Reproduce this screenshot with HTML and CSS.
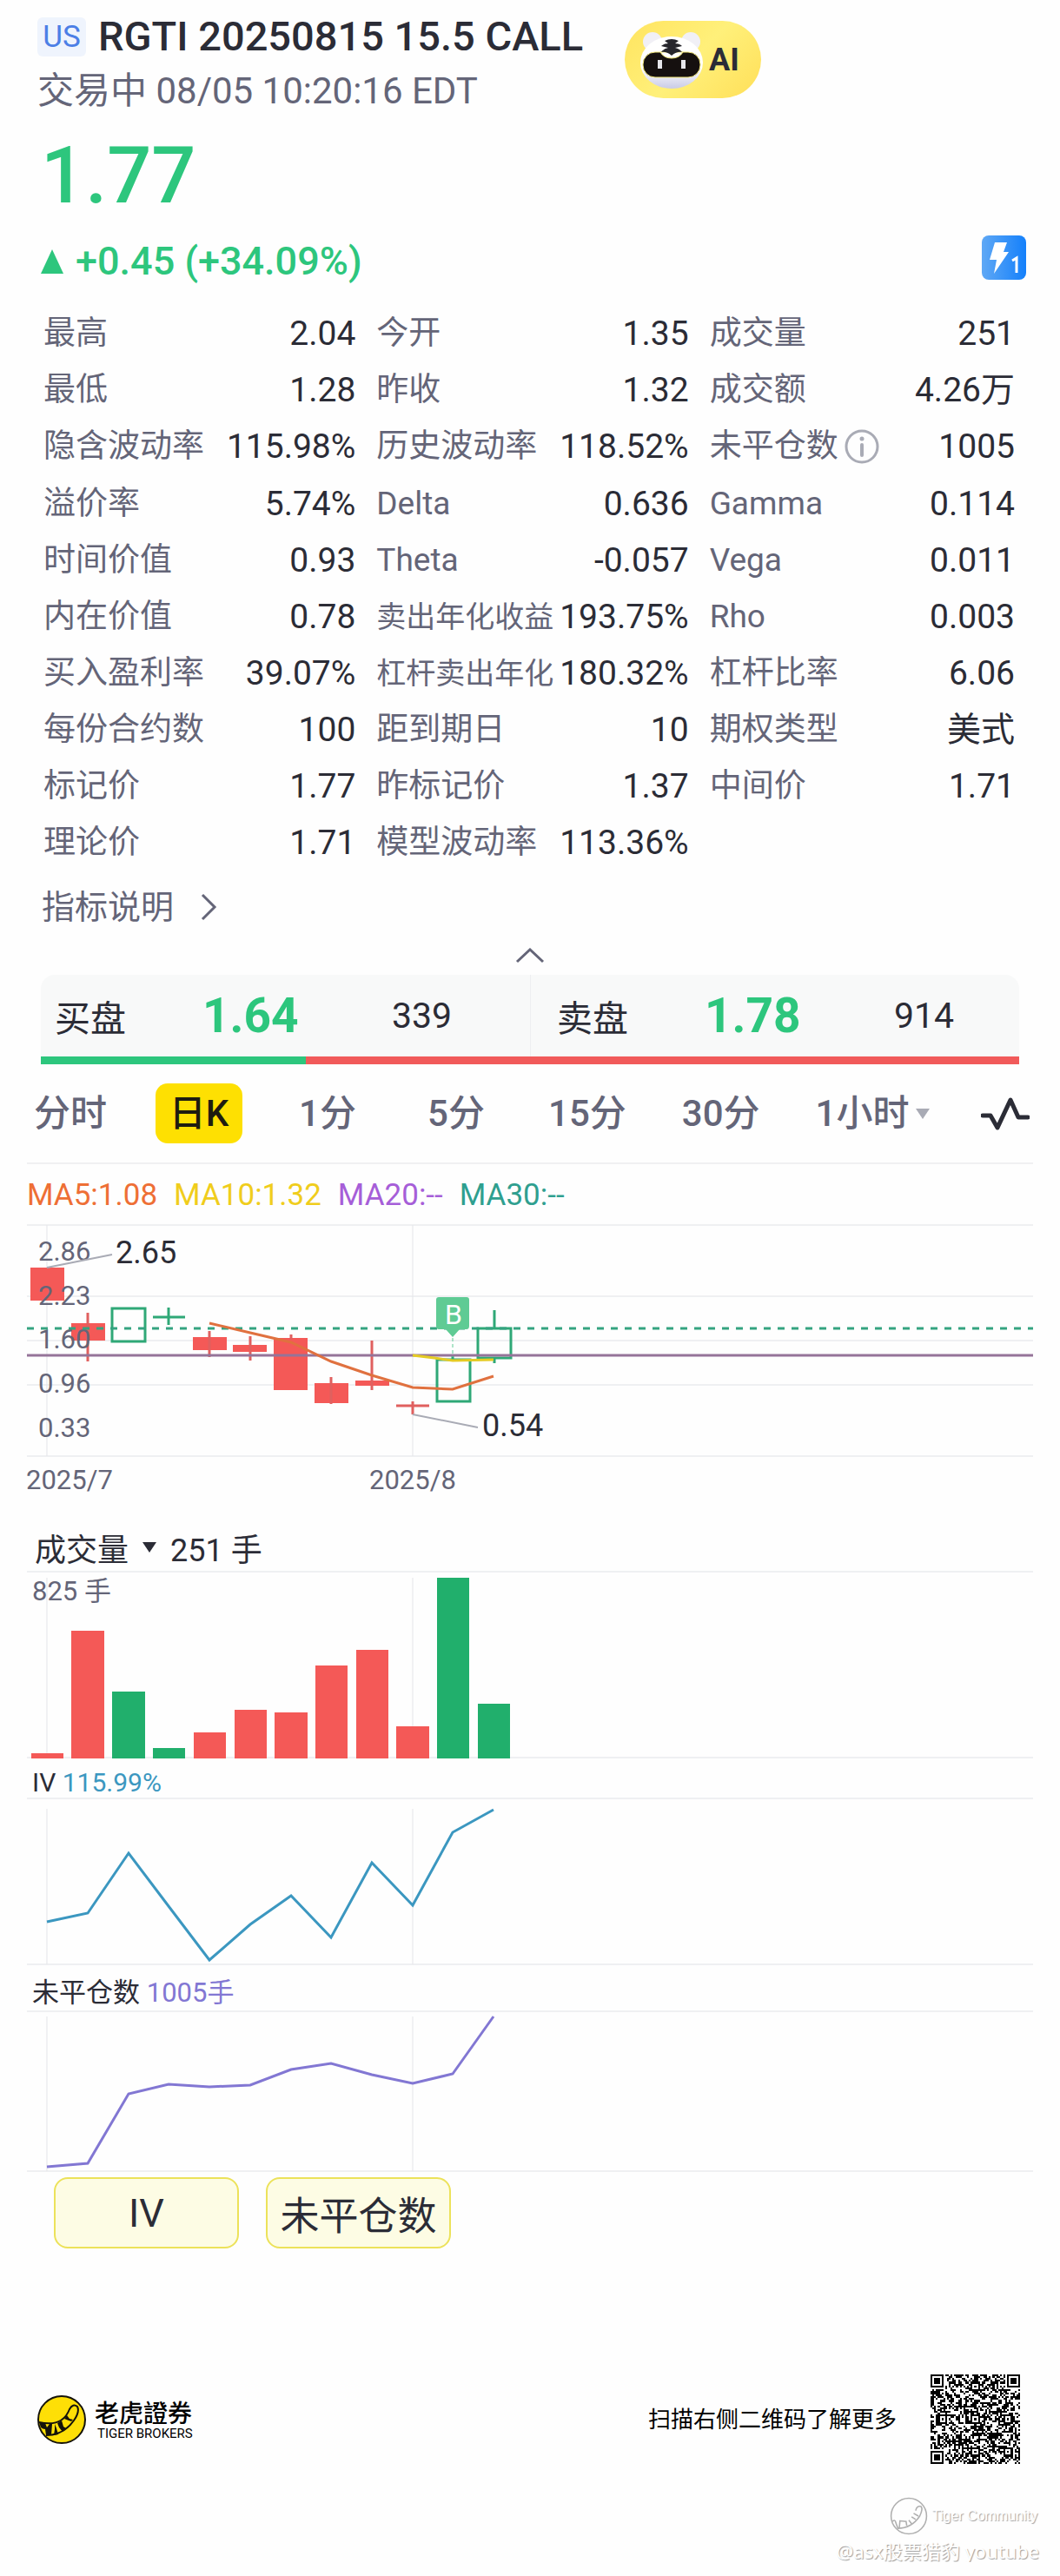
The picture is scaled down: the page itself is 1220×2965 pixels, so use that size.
FILE: index.html
```
<!DOCTYPE html>
<html lang="zh-CN">
<head>
    <meta charset="UTF-8">
    <meta name="viewport" content="width=device-width, initial-scale=1.0">
    <title>RGTI 20250815 15.5 CALL</title>
    <link rel="stylesheet" href="styles.css">
</head>
<body>

<header class="header">
    <div>
        <div class="title-row">
            <span class="market">US</span>
            <h1>RGTI 20250815 15.5 CALL</h1>
        </div>
        <p class="status">交易中 08/05 10:20:16 EDT</p>
    </div>
    <button class="ai-btn">
        <svg width="74" height="68" viewBox="0 0 74 68">
            <defs>
                <linearGradient id="face" x1="0" y1="0" x2="0" y2="1">
                    <stop offset="0.6" stop-color="#ffffff"/>
                    <stop offset="1" stop-color="#c9cbe6"/>
                </linearGradient>
            </defs>
            <circle cx="15" cy="13" r="11" fill="#f1f0f6"/>
            <circle cx="59" cy="13" r="11" fill="#f1f0f6"/>
            <ellipse cx="37" cy="37" rx="36" ry="30" fill="url(#face)"/>
            <rect x="4" y="25" width="66" height="29" rx="14" fill="#15100f" stroke="#f2e77a" stroke-width="1"/>
            <path d="M24 25 Q28 32 37 32 Q46 32 50 25 Z" fill="#fff" stroke="#f2e77a" stroke-width="1"/>
            <path d="M29 12 Q37 8 45 12 L41 15 Q46 15 49 18 L41 20 Q46 21 49 25 Q43 24 37 29 Q31 24 25 25 Q28 21 33 20 L25 18 Q28 15 33 15 Z" fill="#26262c"/>
            <rect x="21" y="34" width="5" height="10" fill="#e6e6ea"/>
            <rect x="48" y="34" width="5" height="10" fill="#e6e6ea"/>
        </svg>
        <span>AI</span>
    </button>
</header>

<section class="price">
    <div class="last">1.77</div>
    <div class="change-row">
        <span class="change">
            <svg width="26" height="28" viewBox="0 0 26 28"><path d="M13 0 L26 28 H0 Z" fill="#2dc67d"/></svg>
            +0.45 (+34.09%)
        </span>
        <svg width="51" height="51" viewBox="0 0 51 51">
            <defs>
                <linearGradient id="level" x1="0" y1="0" x2="1" y2="0">
                    <stop offset="0" stop-color="#5fa8f5"/>
                    <stop offset="1" stop-color="#1480fb"/>
                </linearGradient>
            </defs>
            <rect width="51" height="51" rx="8" fill="url(#level)"/>
            <path d="M15 8 H29 L25 19 H31 L14 44 L17 28 H9 Z" fill="#fff"/>
            <path d="M35 29 L40 26 V43" fill="none" stroke="#fff" stroke-width="3"/>
        </svg>
    </div>
</section>

<dl class="stats">
    <div><dt>最高</dt><dd>2.04</dd></div>
    <div><dt>今开</dt><dd>1.35</dd></div>
    <div><dt>成交量</dt><dd>251</dd></div>

    <div><dt>最低</dt><dd>1.28</dd></div>
    <div><dt>昨收</dt><dd>1.32</dd></div>
    <div><dt>成交额</dt><dd>4.26万</dd></div>

    <div><dt>隐含波动率</dt><dd>115.98%</dd></div>
    <div><dt>历史波动率</dt><dd>118.52%</dd></div>
    <div>
        <dt>未平仓数
            <svg width="42" height="42" viewBox="0 0 42 42">
                <circle cx="21" cy="21" r="18" fill="none" stroke="#a9abb5" stroke-width="3"/>
                <circle cx="21" cy="12" r="2.5" fill="#a9abb5"/>
                <path d="M21 19 V31" stroke="#a9abb5" stroke-width="4" stroke-linecap="round"/>
            </svg>
        </dt>
        <dd>1005</dd>
    </div>

    <div><dt>溢价率</dt><dd>5.74%</dd></div>
    <div><dt>Delta</dt><dd>0.636</dd></div>
    <div><dt>Gamma</dt><dd>0.114</dd></div>

    <div><dt>时间价值</dt><dd>0.93</dd></div>
    <div><dt>Theta</dt><dd>-0.057</dd></div>
    <div><dt>Vega</dt><dd>0.011</dd></div>

    <div><dt>内在价值</dt><dd>0.78</dd></div>
    <div><dt class="long">卖出年化收益</dt><dd>193.75%</dd></div>
    <div><dt>Rho</dt><dd>0.003</dd></div>

    <div><dt>买入盈利率</dt><dd>39.07%</dd></div>
    <div><dt class="long">杠杆卖出年化</dt><dd>180.32%</dd></div>
    <div><dt>杠杆比率</dt><dd>6.06</dd></div>

    <div><dt>每份合约数</dt><dd>100</dd></div>
    <div><dt>距到期日</dt><dd>10</dd></div>
    <div><dt>期权类型</dt><dd>美式</dd></div>

    <div><dt>标记价</dt><dd>1.77</dd></div>
    <div><dt>昨标记价</dt><dd>1.37</dd></div>
    <div><dt>中间价</dt><dd>1.71</dd></div>

    <div><dt>理论价</dt><dd>1.71</dd></div>
    <div><dt>模型波动率</dt><dd>113.36%</dd></div>
</dl>

<a class="explain" href="#">
    指标说明
    <svg width="20" height="32" viewBox="0 0 20 32"><path d="M3 2 L17 16 L3 30" fill="none" stroke="#646578" stroke-width="3"/></svg>
</a>

<button class="collapse" aria-label="收起">
    <svg width="34" height="18" viewBox="0 0 34 18"><path d="M2 16 L17 2 L32 16" fill="none" stroke="#646578" stroke-width="3"/></svg>
</button>

<section class="quotes">
    <div class="quote">
        <span class="side">买盘</span>
        <span class="quote-price">1.64</span>
        <span class="size">339</span>
    </div>
    <div class="quote ask">
        <span class="side">卖盘</span>
        <span class="quote-price">1.78</span>
        <span class="size">914</span>
    </div>
</section>
<div class="ratio"><div style="width: 27.06%"></div></div>

<nav class="tabs">
    <button>分时</button>
    <button class="active">日K</button>
    <button>1分</button>
    <button>5分</button>
    <button>15分</button>
    <button>30分</button>
    <button>1小时<svg width="16" height="12" viewBox="0 0 16 12"><path d="M0 0 H16 L8 12 Z" fill="#a9abb5"/></svg></button>
    <button class="indicator" aria-label="指标">
        <svg width="56" height="38" viewBox="0 0 56 38"><path d="M2 21 H11 L19 35 L34 3 L43 23 H54" fill="none" stroke="#2b2c36" stroke-width="5" stroke-linecap="round" stroke-linejoin="round"/></svg>
    </button>
</nav>

<div class="legend">
    <span class="ma5">MA5:1.08</span>
    <span class="ma10">MA10:1.32</span>
    <span class="ma20">MA20:--</span>
    <span class="ma30">MA30:--</span>
</div>

<!-- K线 -->
<svg class="chart" viewBox="0 0 1220 330">
    <g class="grid">
        <path d="M31 10 H1189 M31 92 H1189 M31 143 H1189 M31 194 H1189 M31 276 H1189"/>
        <path d="M54 10 V276 M475 10 V276"/>
    </g>
    <g class="down">
        <rect x="35" y="59" width="39" height="38"/>
        <rect x="82" y="123" width="39" height="20"/><path d="M101 111 V167"/>
        <rect x="222" y="139" width="39" height="15"/><path d="M241 132 V162"/>
        <rect x="268" y="148" width="39" height="8"/><path d="M288 138 V166"/>
        <rect x="315" y="140" width="39" height="60"/><path d="M335 136 V142"/>
        <rect x="362" y="192" width="39" height="23"/><path d="M381 185 V216"/>
        <rect x="409" y="189" width="39" height="6"/><path d="M428 143 V200"/>
        <path d="M456 218 H494 M475 213 V228"/>
    </g>
    <g class="up">
        <rect x="129" y="106" width="38" height="38"/>
        <path d="M176 116 H213 M194 105 V125"/>
        <rect x="503" y="165" width="38" height="48"/><path d="M521 160 V165"/>
        <rect x="550" y="129" width="38" height="34"/><path d="M569 108 V129 M569 163 V169"/>
    </g>
    <g class="axis">
        <text x="44" y="51">2.86</text>
        <text x="44" y="102">2.23</text>
        <text x="44" y="152">1.60</text>
        <text x="44" y="203">0.96</text>
        <text x="44" y="254">0.33</text>
        <text x="30" y="314">2025/7</text>
        <text x="425" y="314">2025/8</text>
    </g>
    <path class="last-line" d="M31 129 H1189"/>
    <path class="cost-line" d="M31 160 H1189"/>
    <polyline class="line-ma5" points="241,123 288,134 335,145 381,167 428,183 475,197 521,199 568,184"/>
    <polyline class="line-ma10" points="475,160 500,163 521,166 568,165"/>
    <path class="leader" d="M54 59 L129 44 M475 228 L550 243"/>
    <g class="extreme">
        <text x="133" y="54">2.65</text>
        <text x="555" y="253">0.54</text>
    </g>
    <path class="buy-line" d="M521 140 V162"/>
    <path class="buy-tag" d="M505 93 H537 Q540 93 540 96 V126 Q540 130 537 130 H529 L521 139 L513 130 H505 Q502 130 502 126 V96 Q502 93 505 93 Z"/>
    <text class="buy-text" x="522" y="124">B</text>
</svg>

<!-- 成交量 -->
<h2 class="volume-head">
    成交量
    <svg width="16" height="12" viewBox="0 0 16 12"><path d="M0 0 H16 L8 12 Z" fill="#2b2c36"/></svg>
    251 手
</h2>
<svg class="chart" viewBox="0 0 1220 220">
    <g class="grid">
        <path d="M31 1 H1189 M31 215 H1189"/>
        <path d="M54 8 V215 M475 8 V215"/>
    </g>
    <g class="down">
        <rect x="36" y="210" width="37" height="6"/>
        <rect x="82" y="69" width="38" height="147"/>
        <rect x="223" y="186" width="37" height="30"/>
        <rect x="270" y="160" width="37" height="56"/>
        <rect x="316" y="163" width="38" height="53"/>
        <rect x="363" y="109" width="37" height="107"/>
        <rect x="410" y="91" width="37" height="125"/>
        <rect x="456" y="179" width="38" height="37"/>
    </g>
    <g class="up-solid">
        <rect x="129" y="139" width="38" height="77"/>
        <rect x="176" y="204" width="37" height="12"/>
        <rect x="503" y="8" width="37" height="208"/>
        <rect x="550" y="153" width="37" height="63"/>
    </g>
    <g class="axis"><text x="37" y="34">825 手</text></g>
</svg>

<!-- IV -->
<h3 class="iv-head">IV <span>115.99%</span></h3>
<svg class="chart" viewBox="0 0 1220 194">
    <g class="grid">
        <path d="M31 1 H1189 M31 192 H1189"/>
        <path d="M54 13 V192 M475 13 V192"/>
    </g>
    <polyline class="line-iv" points="54,143 101,133 148,64 194,125 241,187 288,146 335,113 381,161 428,75 475,124 521,40 568,14"/>
</svg>

<!-- 未平仓数 -->
<h3 class="oi-head">未平仓数 <span>1005手</span></h3>
<svg class="chart" viewBox="0 0 1220 187">
    <g class="grid">
        <path d="M31 1 H1189 M31 185 H1189"/>
        <path d="M54 7 V185 M475 7 V185"/>
    </g>
    <polyline class="line-oi" points="54,180 101,176 148,96 194,85 241,88 288,86 335,68 381,61 428,74 475,84 521,73 568,7"/>
</svg>

<div class="toggles">
    <button>IV</button>
    <button>未平仓数</button>
</div>

<footer class="footer">
    <svg width="56" height="56" viewBox="0 0 56 56">
        <circle cx="28" cy="28" r="27" fill="#fedf06" stroke="#15130a" stroke-width="2"/>
        <path d="M2 31 Q29 37 37 16 Q41 9 46 13 Q49 19 42 29 Q30 46 10 46" fill="#fedf06" stroke="#15130a" stroke-width="2"/>
        <path d="M2 31 L9 32 L11 37 L14 33 L17 33 L16 46 L10 46 L9 39 Q6 39 4 37 Z M20 33 L22 38 L24 45 L19 46 L20 39 Z M23 32 L28 29 L30 36 L33 38 L29 42 L25 37 Z M31 27 L34 23 L37 27 L41 28 L39 30 L36 29 Z" fill="#15130a"/>
    </svg>
    <div class="brand">
        <strong>老虎證券</strong>
        <span>TIGER BROKERS</span>
    </div>
    <p class="scan">扫描右侧二维码了解更多</p>
    <svg id="qr" width="103" height="103" viewBox="0 0 49 49" shape-rendering="crispEdges"></svg>
</footer>

<div class="watermark">
    <div class="community">
        <svg width="44" height="44" viewBox="0 0 56 56">
            <circle cx="28" cy="28" r="26"/>
            <path d="M4 36 Q8 32 9 38 L12 46 Q32 46 44 28 Q49 18 46 14 Q40 12 38 20 M14 46 L15 35 L24 36 L25 42 M28 34 L32 39 M32 29 L38 33 M35 24 L42 28"/>
        </svg>
        Tiger Community
    </div>
    <div class="author">@asx股票猎豹 youtube</div>
</div>

<script>
    // dibuja el código QR de 49 x 49 módulos
    const N = 49;
    const marks = [6, 24, 42];
    let seed = 20250815;
    let path = "";

    function random() {
        seed = (seed * 1103515245 + 12345) % 2147483648;
        return seed / 2147483648;
    }

    function ring(x, y, cx, cy) {
        return Math.max(Math.abs(x - cx), Math.abs(y - cy));
    }

    function isDark(x, y) {
        const noise = random() < 0.5;
        for (const [cx, cy] of [[3, 3], [45, 3], [3, 45]]) {
            const d = ring(x, y, cx, cy);
            if (d <= 4) return d <= 1 || d === 3;
        }
        for (const cx of marks) {
            for (const cy of marks) {
                const corner = (cx === 6 && cy !== 24) || (cx === 42 && cy === 6);
                const d = ring(x, y, cx, cy);
                if (!corner && d <= 2) return d !== 1;
            }
        }
        if (x === 6 || y === 6) return (x + y) % 2 === 0;
        return noise;
    }

    for (let y = 0; y < N; y++) {
        for (let x = 0; x < N; x++) {
            if (isDark(x, y)) path += `M${x} ${y}h1v1h-1z`;
        }
    }
    document.getElementById("qr").innerHTML = `<path d="${path}"/>`;
</script>

</body>
</html>
```
FILE: styles.css
```
* {
    box-sizing: border-box;
}
body {
    margin: 0;
    font-family: Roboto, "Noto Sans CJK SC", sans-serif;
    background-color: #fefefe;
    color: #2b2c36;
}
h1, h2, h3, p, dl, dd {
    margin: 0;
    font-weight: 400;
}
button {
    padding: 0;
    border: none;
    background: none;
    font-family: inherit;
    color: inherit;
    cursor: pointer;
}
svg {
    display: block;
    flex-shrink: 0;
}

/* cabecera */
.header {
    display: flex;
    align-items: flex-start;
    gap: 48px;
    padding: 18px 43px 0;
}
.title-row {
    display: flex;
    align-items: center;
    gap: 14px;
}
.market {
    width: 56px;
    border-radius: 6px;
    background-color: #eff4fd;
    color: #4c7fe6;
    font-size: 35px;
    line-height: 45px;
    text-align: center;
}
h1 {
    font-size: 47px;
    line-height: 48px;
    font-weight: 500;
}
.status {
    margin-top: 17px;
    color: #646578;
    font-size: 42px;
    line-height: 44px;
}
.ai-btn {
    display: flex;
    align-items: center;
    gap: 6px;
    width: 157px;
    height: 89px;
    margin-top: 6px;
    padding-left: 17px;
    border-radius: 45px;
    background: linear-gradient(135deg, #ffe45f, #fff07a 50%, #ffdf58);
    font-size: 36px;
    font-weight: 700;
}

/* precio */
.price {
    padding: 31px 39px 0 47px;
    color: #2dc67d;
}
.last {
    font-size: 90px;
    line-height: 90px;
    font-weight: 500;
}
.change-row {
    display: flex;
    justify-content: space-between;
    margin-top: 23px;
}
.change {
    display: flex;
    align-items: center;
    gap: 14px;
    font-size: 45px;
    line-height: 60px;
    font-weight: 500;
}

/* datos */
.stats {
    display: grid;
    grid-template-columns: repeat(3, 1fr);
    column-gap: 24px;
    padding: 20px 44px 0 50px;
    line-height: 40px;
}
.stats div {
    display: flex;
    justify-content: space-between;
    align-items: center;
    min-height: 65px;
    padding: 12px 0;
    white-space: nowrap;
}
.stats div:nth-child(3n) {
    padding-right: 8px;
}
.stats dt {
    display: flex;
    align-items: center;
    gap: 6px;
    color: #646578;
    font-size: 37px;
}
.stats .long {
    font-size: 34px;
}
.stats dd {
    font-size: 39px;
}
.explain {
    display: flex;
    align-items: center;
    gap: 30px;
    margin-top: 17px;
    padding-left: 48px;
    color: #646578;
    font-size: 38px;
    line-height: 50px;
    text-decoration: none;
}
.collapse {
    display: flex;
    justify-content: center;
    width: 100%;
    height: 53px;
    padding-top: 22px;
}

/* compra / venta */
.quotes {
    display: grid;
    grid-template-columns: 1fr 1fr;
    height: 94px;
    margin: 0 47px;
    border-radius: 16px 16px 0 0;
    background-color: #f8f9f9;
}
.quote {
    display: flex;
    align-items: center;
    padding-left: 16px;
}
.ask {
    padding-left: 30px;
    border-left: 1px solid #eeeff1;
}
.side {
    width: 170px;
    font-size: 41px;
}
.quote-price {
    width: 218px;
    color: #2dc67d;
    font-size: 55px;
    font-weight: 700;
}
.size {
    font-size: 41px;
}
.ratio {
    height: 9px;
    margin: 0 47px;
    background-color: #f15a5a;
}
.ratio div {
    height: 100%;
    background-color: #2dc67d;
}

/* periodos */
.tabs {
    display: flex;
    gap: 48px;
    margin: 0 31px;
    padding: 22px 4px 22px 0;
    border-bottom: 2px solid #f0f0f2;
    color: #646578;
}
.tabs button {
    display: flex;
    align-items: center;
    justify-content: center;
    gap: 8px;
    min-width: 100px;
    height: 69px;
    padding: 0 8px;
    border-radius: 14px;
    font-size: 42px;
    line-height: 50px;
    font-weight: 500;
    white-space: nowrap;
}
.tabs .active {
    background-color: #fee002;
    color: #1e1c10;
}
.tabs .indicator {
    min-width: 56px;
    margin-left: auto;
    padding: 0;
}
.legend {
    display: flex;
    gap: 19px;
    padding: 16px 31px 4px;
    font-size: 35px;
    line-height: 40px;
}
.ma5 { color: #ee6f35; }
.ma10 { color: #f0cd1c; }
.ma20 { color: #a65ed8; }
.ma30 { color: #2f9f8f; }

/* gráficos */
.chart {
    width: 100%;
    height: auto;
}
.chart path, .chart polyline {
    fill: none;
}
.grid {
    stroke: #eff0f2;
    stroke-width: 2;
}
.grid path + path {
    stroke: #e4e5e9;
    stroke-width: 1;
}
.down {
    fill: #f45957;
    stroke: #e0605f;
    stroke-width: 3;
}
.down rect {
    stroke: none;
}
.up {
    fill: none;
    stroke: #2fa877;
    stroke-width: 3;
}
.up-solid {
    fill: #21af6c;
}
.axis {
    fill: #646578;
    font-size: 31px;
}
.extreme {
    fill: #2b2c36;
    font-size: 36px;
}
.leader {
    stroke: #a9abb5;
    stroke-width: 2;
}
.last-line {
    stroke: #35a380;
    stroke-width: 3;
    stroke-dasharray: 8 8;
}
.cost-line {
    stroke: #957499;
    stroke-width: 3;
}
.line-ma5 {
    stroke: #e0713f;
    stroke-width: 3;
}
.line-ma10 {
    stroke: #e5cb24;
    stroke-width: 3;
}
.line-iv {
    stroke: #3b97c0;
    stroke-width: 3;
}
.line-oi {
    stroke: #8277d3;
    stroke-width: 3;
}
.buy-line {
    stroke: #5fcb94;
    stroke-width: 1;
    stroke-dasharray: 4 3;
}
.chart .buy-tag {
    fill: #5fcb94;
}
.buy-text {
    fill: #fff;
    font-size: 32px;
    text-anchor: middle;
}
.volume-head {
    display: flex;
    align-items: center;
    gap: 16px;
    height: 78px;
    padding: 24px 40px 0;
    font-size: 36px;
}
.iv-head, .oi-head {
    padding: 7px 37px 0;
    font-size: 31px;
    line-height: 34px;
}
.iv-head {
    font-size: 30px;
}
.iv-head span {
    color: #3b97c0;
}
.oi-head {
    padding: 14px 37px 3px;
}
.oi-head span {
    color: #8277d3;
}
.toggles {
    display: flex;
    gap: 31px;
    padding: 5px 62px 0;
}
.toggles button {
    width: 213px;
    height: 82px;
    border: 2px solid #ece25a;
    border-radius: 16px;
    background-color: #fdfce4;
    font-size: 45px;
}

/* pie */
.footer {
    display: flex;
    align-items: center;
    margin-top: 145px;
    padding: 0 46px 0 43px;
    color: #000;
}
.brand {
    display: flex;
    flex-direction: column;
    margin-left: 10px;
}
.brand strong {
    font-family: "Noto Sans CJK TC", sans-serif;
    font-size: 28px;
    line-height: 32px;
    font-weight: 500;
}
.brand span {
    padding-left: 3px;
    font-size: 15px;
    line-height: 18px;
}
.scan {
    margin: 0 39px 0 auto;
    font-size: 26px;
    line-height: 30px;
}
.watermark {
    display: flex;
    flex-direction: column;
    align-items: flex-end;
    padding: 38px 24px 0;
    color: #fff;
    text-shadow: 1px 1px 1px #9c9c9c;
}
.community {
    display: flex;
    align-items: center;
    gap: 5px;
    padding-right: 2px;
    font-family: "Liberation Sans", sans-serif;
    font-size: 16px;
}
.community svg {
    fill: none;
    stroke: #b0b0b0;
    stroke-width: 2;
}
.author {
    margin-top: 5px;
    font-family: "Noto Sans", "Noto Sans CJK SC", sans-serif;
    font-size: 22px;
    line-height: 26px;
}
```
